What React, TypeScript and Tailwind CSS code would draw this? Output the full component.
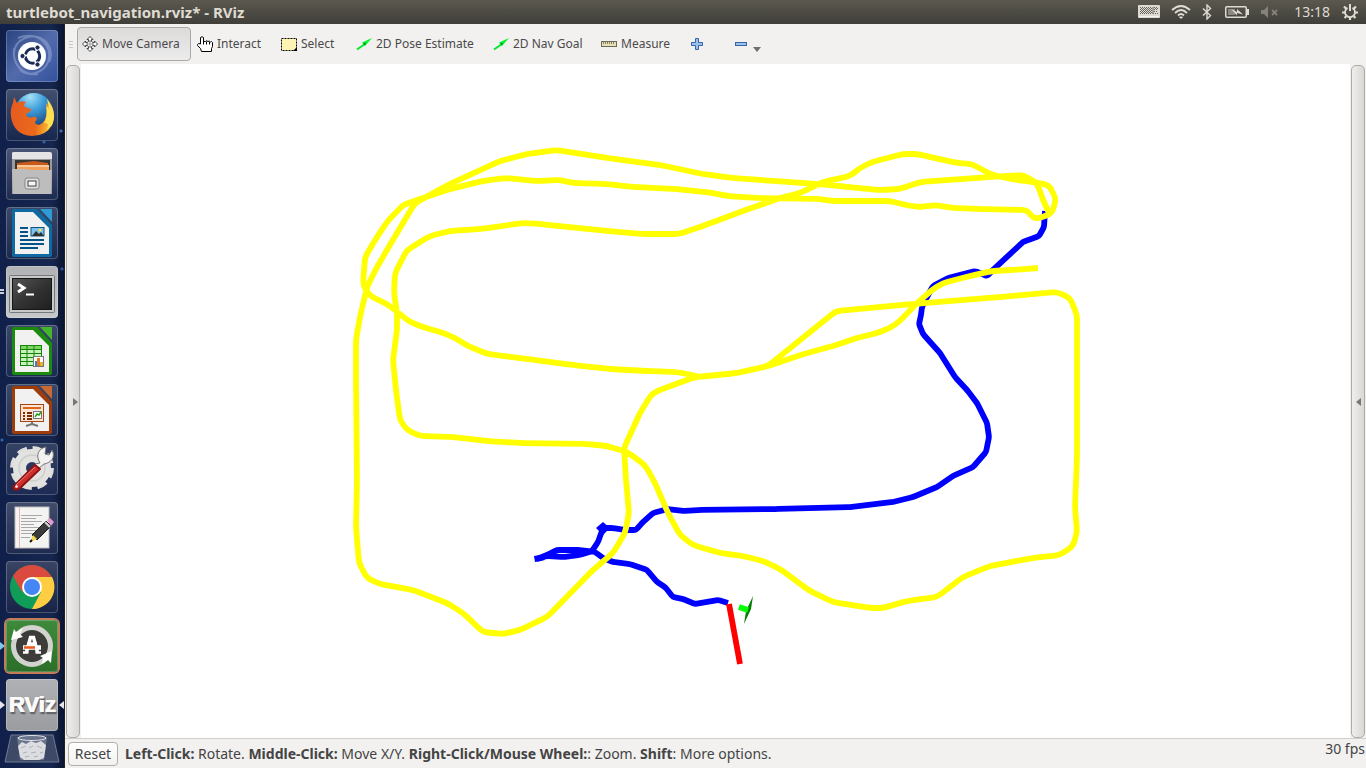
import type { ReactNode } from "react";

type Point = [number, number];

const parse = (text: string): Point[] =>
  text
    .trim()
    .split(/\s+/)
    .map((pair) => pair.split(",").map(Number) as Point);

/* Joins the points with straight runs and softly rounded corners. */
function roundedPath(points: Point[], radius = 5) {
  const toward = (from: Point, to: Point): Point => {
    const dx = to[0] - from[0];
    const dy = to[1] - from[1];
    const length = Math.hypot(dx, dy) || 1;
    const r = Math.min(radius, length / 2);
    return [from[0] + (dx / length) * r, from[1] + (dy / length) * r];
  };
  let d = `M${points[0][0]} ${points[0][1]}`;
  for (let i = 1; i < points.length - 1; i++) {
    const a = toward(points[i], points[i - 1]);
    const b = toward(points[i], points[i + 1]);
    d += `L${a[0]} ${a[1]}Q${points[i][0]} ${points[i][1]} ${b[0]} ${b[1]}`;
  }
  const last = points[points.length - 1];
  return `${d}L${last[0]} ${last[1]}`;
}

const plannedPath = parse(`
1038,268 1013,270 992,271 970,276 943,283 932,290 915,305 900,321 890,328 877,333 857,338 833,346 807,353 768,366 737,373 700,377
692,375 677,372 647,371 610,369 573,365 527,359 488,354 470,347 453,337 443,333 423,327 410,322 387,304 370,296 363,285 365,257 377,237
387,222 403,205 420,199 450,189 483,181 505,178 537,181 560,180 573,183 607,184 633,187 677,189 713,193 727,196 757,198 820,199 832,201 863,201
890,201 910,206 922,207 935,205 953,208 983,209 1027,210 1034,219 1043,217 1052,213 1056,199 1049,185 1033,182 1010,179 990,174 972,164
957,163 917,154 903,154 872,162 860,168 850,176 823,182 800,193 780,198 743,211 700,227 679,234 643,234 607,231 540,224 523,223 480,229 450,231
430,236 407,250 395,273 394,293 397,313 397,330 393,360 396,390 400,420 407,430 420,436 453,437 487,441 520,443 587,444 607,446 627,452 645,465
655,483 668,513 680,535 693,545 720,553 743,556 763,561 780,569 810,591 833,602 870,608 883,608 907,601 937,597 963,577 990,566 1033,558 1060,555
1073,546 1077,532 1075,507 1077,457 1077,315 1070,298 1057,292 1000,297 913,304 836,311 768,366 737,373 695,377 657,391 651,395 640,413 624,448
626,480 629,513 625,533 613,553 593,570 547,617 520,630 503,634 483,632 463,613 447,603 413,590 380,584 367,578 359,563 356,527 357,480 356,380
356,340 360,317 367,287 377,267 397,233 415,203 450,184 500,161 527,154 557,150 607,158 660,165 703,174 733,178 817,184 880,190 900,189 920,182
990,177 1023,175 1037,183 1043,200 1049,213`);

const drivenPath = parse(`
1045,211 1044,227 1039,236 1023,242 995,268 987,276 975,271 948,278 933,286 927,297 922,307 921,315 919,324 923,334 940,353 955,377 967,390 977,403
987,423 989,437 986,452 973,467 953,476 937,487 913,497 893,502 850,507 777,509 700,510 683,511 668,509 653,513 642,523 636,530 625,530 613,528 603,528
598,542 592,551 580,555 563,557 547,556 537,559 547,555 557,550 580,550 595,552 603,558 613,562 630,564 647,570 657,582 665,587 673,597 683,599
695,604 718,600 728,603`);

function Viewport() {
  return (
    <svg
      viewBox="81 64 1269 674"
      preserveAspectRatio="xMidYMid meet"
      className="block h-full w-full"
      role="img"
      aria-label="Robot path view"
      fill="none"
      strokeWidth="5.8"
      strokeLinejoin="round"
    >
      <path d={roundedPath(drivenPath, 2)} stroke="#0000ff" />
      <path d="M603 522l7 6-7 7-7-7z" fill="#0000ff" />
      <path d="M534 556L540 555L545 560L535 562Z" fill="#0000ff" />
      <path d={roundedPath(plannedPath)} stroke="#ffff00" />
      <path d="M729 604L740 664" stroke="#ff0000" />
      <path d="M753 596L751 609L744 624L746 611Z" fill="#008000" />
      <path d="M739 607L748 610" stroke="#00ff00" />
    </svg>
  );
}

/* ---------- launcher ---------- */

const Icon = ({ children }: { children: ReactNode }) => (
  <svg viewBox="0 0 52 52" className="block size-[52px]" aria-hidden="true">
    {children}
  </svg>
);

const DashIcon = () => (
  <Icon>
    <path d="M8 24C8 8 28 2 38 10C46 17 46 27 43 32M12 8C32 0 48 16 42 32C38 42 24 48 14 40M8 18C6 34 16 46 32 44" fill="none" stroke="#9fb0dc" strokeOpacity=".5" strokeWidth="2" />
    <circle cx="26" cy="26" r="14" fill="#fff" />
    <circle cx="26.500" cy="26" r="7.200" fill="none" stroke="#1b2a57" strokeWidth="3" strokeDasharray="13 2" strokeDashoffset="6" />
    <circle cx="16.500" cy="26" r="2.600" fill="#1b2a57" stroke="#fff" />
    <circle cx="31.500" cy="17.500" r="2.600" fill="#1b2a57" stroke="#fff" />
    <circle cx="31.500" cy="34.500" r="2.600" fill="#1b2a57" stroke="#fff" />
  </Icon>
);

const FirefoxIcon = () => (
  <Icon>
    <defs>
      <radialGradient id="ff-globe" cx=".4" cy=".1" r=".9"><stop offset="0" stopColor="#a4e0f5" /><stop offset=".4" stopColor="#3f9fdb" /><stop offset="1" stopColor="#12366f" /></radialGradient>
      <linearGradient id="ff-fox" x1="0" x2="1" y2=".1"><stop offset="0" stopColor="#e65a20" /><stop offset=".65" stopColor="#ea6a1c" /><stop offset="1" stopColor="#fbc637" /></linearGradient>
    </defs>
    <circle cx="28" cy="23" r="19" fill="url(#ff-globe)" />
    <path d="M8 8L11 14Q15 11 20 13Q17 16 19 18L25 20Q26 22 20 25Q21 30 27 28Q30 27 31 30Q26 35 33 36Q41 33 41 20L40 14Q51 24 46 36Q40 47 26 47Q8 46 5 28Q4 20 7 14Z" fill="url(#ff-fox)" />
    <path d="M41 10Q52 23 46 36L40 42Q45 33 38 34Q42 28 40 17L43 20Z" fill="#ffdf52" />
  </Icon>
);

const FilesIcon = () => (
  <Icon>
    <path d="M6 5Q6 4 8 4H44Q46 4 46 6V44H6Z" fill="#e4e4e4" />
    <path d="M6 11H46V46H6Z" fill="#9a9a9a" />
    <path d="M9 12H44V25H9Z" fill="#353535" />
    <path d="M11 15L28 13L42 15V24H11Z" fill="#c75a1c" />
    <path d="M11 17H43V24H11Z" fill="#f2a05a" />
    <path d="M11 18H43" stroke="#fff0dd" />
    <path d="M6 21H21L24 22H46L45 46H7Z" fill="#bdbdbd" />
    <rect x="19" y="30" width="14" height="11" rx="2" fill="#dedede" stroke="#858585" />
    <rect x="22" y="33" width="8" height="5" fill="#f6f6f6" stroke="#444" />
  </Icon>
);

function OfficePage({ color, fold, children }: { color: string; fold: string; children: ReactNode }) {
  return (
    <Icon>
      <path d="M8 2H31L46 18V48Q46 50 44 50H8Q6 50 6 48V4Q6 2 8 2Z" fill={color} />
      <path d="M34 2H46V15Z" fill={fold} />
      <path d="M9 5H27L43 21V47H9Z" fill="#f1f1f1" />
      {children}
    </Icon>
  );
}

const WriterIcon = () => (
  <OfficePage color="#0e6aa0" fold="#2e9bd4">
    <path d="M14 21H22M14 25H22M14 29H22M14 33H38M14 37H38M14 41H32" stroke="#055488" strokeWidth="2" />
    <rect x="25" y="20.500" width="13" height="8.500" fill="#7cc2ed" stroke="#055488" />
    <path d="M26 29L30 24L33 27L35 25L38 29Z" fill="#30302a" />
    <circle cx="34" cy="23" r="1.500" fill="#ffe04d" />
  </OfficePage>
);

const CalcIcon = () => (
  <OfficePage color="#1c8a0c" fold="#43b62e">
    <path d="M14 20H36V41H14Z" fill="#c5f3b8" />
    <path d="M14 20H36V24H14Z" fill="#7ad862" />
    <path d="M14.500 20V41M21 20V41M28 20V41M35.500 20V41M14 20.500H36M14 24.500H36M14 28.500H36M14 32.500H36M14 36.500H36M14 40.500H36" stroke="#15820b" />
    <rect x="27.500" y="31.500" width="10" height="10" fill="#fff" stroke="#777" />
    <path d="M29 36H31V41H29Z" fill="#2b88ce" /><path d="M31 33H34V41H31Z" fill="#ef7521" /><path d="M34 37H37V41H34Z" fill="#e0b622" />
  </OfficePage>
);

const ImpressIcon = () => (
  <OfficePage color="#9e3d0a" fold="#cb6932">
    <rect x="14.500" y="20.500" width="23" height="17" fill="#fbe4d4" stroke="#a5450f" />
    <path d="M17 24H35" stroke="#e0661d" strokeWidth="2" />
    <path d="M17 29H19M17 32H19M17 35H19M21 29H26M21 32H26M21 35H26" stroke="#7c2d05" strokeWidth="2" />
    <rect x="27.500" y="27.500" width="8" height="7" fill="#fff" stroke="#777" />
    <path d="M29 33L31 30L33 31L35 28" stroke="#25a018" fill="none" strokeWidth="1.500" />
    <path d="M26 38V40L20 42M26 40L32 42" stroke="#777" strokeWidth="2" fill="none" />
  </OfficePage>
);

const TerminalIcon = () => (
  <Icon>
    <defs><linearGradient id="term" x2="1" y2="1"><stop offset="0" stopColor="#555" /><stop offset=".5" stopColor="#333" /><stop offset="1" stopColor="#1f1f1f" /></linearGradient></defs>
    <rect x="3.500" y="9.500" width="45" height="37" rx="1" fill="#c7c8ca" stroke="#77787a" />
    <rect x="6.500" y="12.500" width="39" height="31" fill="url(#term)" stroke="#151515" />
    <path d="M12 18L18 22L12 26" stroke="#fff" strokeWidth="3" fill="none" /><path d="M20 28.500H28" stroke="#fff" strokeWidth="2" />
  </Icon>
);

const SettingsIcon = () => (
  <Icon>
    <circle cx="26" cy="25" r="18" fill="none" stroke="#dededc" strokeWidth="8" strokeDasharray="9 5.137" />
    <circle cx="26" cy="25" r="12.500" fill="none" stroke="#e2e2e0" strokeWidth="13" />
    <circle cx="26" cy="25" r="13" fill="none" stroke="#cdcdcb" strokeWidth="1.500" />
    <path d="M34 20C29 12 33 5 40 4L39 11L43 12L46 7C50 14 45 20 38 21L33 25L29 21Z" fill="#f2f2f0" stroke="#777" />
    <path d="M8 43L29 22L34 26L13 46Q8 48 7 44Z" fill="#d22d2d" stroke="#8d1414" strokeWidth="2" strokeLinejoin="round" />
    <path d="M10 42L29 24" stroke="#f28484" /><circle cx="10.500" cy="43.500" r="1.300" fill="#fff" />
  </Icon>
);

const EditorIcon = () => (
  <Icon>
    <rect x="9" y="5" width="34" height="41" fill="#f4f4f3" stroke="#bdbdbd" />
    <path d="M13.500 5V46" stroke="#f0b2b2" />
    <path d="M15 13.500H36M15 16.500H30M15 19.500H36M15 22.500H28M15 25.500H34M15 28.500H30M15 31.500H27M15 35.500H24" stroke="#a8a8a8" />
    <path d="M40 19L45 24L31 38L26 33Z" fill="#3b3b3b" stroke="#191919" />
    <path d="M41 18L44 16L48 20L45 24Z" fill="#e39ad0" /><path d="M39 20L44 25" stroke="#d8d8d8" strokeWidth="2" />
    <path d="M27 33L31 37L24 40Z" fill="#f0d84b" /><path d="M24 40L26 38" stroke="#111" strokeWidth="2" />
  </Icon>
);

const ChromeIcon = () => (
  <Icon>
    <circle cx="26" cy="26" r="22" fill="#109d58" />
    <path d="M7 15A22 22 0 0 1 45 15L46 16H26L16 31Z" fill="#db4a3e" />
    <path d="M46 16A22 22 0 0 1 26 48L35 31L26 16Z" fill="#ffcd42" />
    <circle cx="26" cy="26" r="10" fill="#fff" /><circle cx="26" cy="26" r="8" fill="#4487f4" />
  </Icon>
);

const UpdaterIcon = () => (
  <Icon>
    <circle cx="26" cy="26" r="16" fill="#3d3c3b" />
    <circle cx="26" cy="26" r="18.500" fill="none" stroke="#d2d3cf" strokeWidth="5" />
    <path d="M5 20L8 9L10 12L17 8L14 14L17 17Z" fill="#fff" />
    <path d="M46 31L45 43L42 40L36 44L37 38L34 36Z" fill="#fff" />
    <path d="M20.500 32L24.500 17.500H27.500L31.500 32M21 24H31" stroke="#fff" strokeWidth="3.500" fill="none" />
    <path d="M17 32.500H22.500M29.500 32.500H35" stroke="#fff" strokeWidth="2.500" />
    <path d="M17 27.500H35" stroke="#fff" strokeWidth="4.500" /><path d="M18 27.500H29" stroke="#e8591c" strokeWidth="2.500" />
  </Icon>
);

const RvizIcon = () => (
  <span className="flex size-[52px] items-center justify-center font-['Liberation_Sans',sans-serif] text-[22px] leading-6 font-bold text-[#fafafa] [text-shadow:1px_0_0_#fafafa,1px_2px_1px_#66666a,2px_2px_1px_#66666a]">
    RViz
  </span>
);

const apps: { name: string; tile: string; icon: ReactNode; left?: "double" | "blue" | "white"; right?: boolean }[] = [
  { name: "Search your computer", tile: "bg-linear-to-br from-[#29437f] via-[#536bab] to-[#32529e]", icon: <DashIcon /> },
  { name: "Firefox Web Browser", tile: "bg-linear-to-b from-[#43506f] to-[#17264d]", icon: <FirefoxIcon /> },
  { name: "Files", tile: "bg-linear-to-b from-[#4a5676] to-[#1e2b51]", icon: <FilesIcon /> },
  { name: "LibreOffice Writer", tile: "bg-linear-to-b from-[#3a4869] to-[#1a294d]", icon: <WriterIcon /> },
  { name: "Terminal", tile: "bg-linear-to-b from-[#b1b2b5] to-[#c6c7c9]", icon: <TerminalIcon />, left: "double" },
  { name: "LibreOffice Calc", tile: "bg-linear-to-b from-[#3a4869] to-[#1b2a50]", icon: <CalcIcon /> },
  { name: "LibreOffice Impress", tile: "bg-linear-to-b from-[#3a4869] to-[#202c50]", icon: <ImpressIcon /> },
  { name: "System Settings", tile: "bg-linear-to-b from-[#344264] to-[#1d2b55]", icon: <SettingsIcon /> },
  { name: "Text Editor", tile: "bg-linear-to-b from-[#424c6b] to-[#1e2b50]", icon: <EditorIcon /> },
  { name: "Google Chrome", tile: "bg-linear-to-b from-[#3a4565] to-[#172448]", icon: <ChromeIcon /> },
  { name: "Software Updater", tile: "bg-linear-to-b from-[#3f8a3c] to-[#2c6f28] ring-2 ring-[#c27c58]", icon: <UpdaterIcon />, left: "blue" },
  { name: "RViz", tile: "bg-linear-to-b from-[#b0b1b5] to-[#9b9ca0]", icon: <RvizIcon />, left: "white", right: true },
];

function Launcher() {
  return (
    <nav
      aria-label="Launcher"
      className="flex w-[65px] shrink-0 flex-col items-center gap-[7px] overflow-hidden border-r border-[#22221f] bg-[#10204a] bg-[radial-gradient(circle_at_61px_107px,#3f6db0_1px,transparent_2px),radial-gradient(circle_at_44px_118px,#38609d_1px,transparent_2px),radial-gradient(circle_at_62px_245px,#2f5698_1px,transparent_2px),radial-gradient(circle_at_2px_416px,#3563a8_1px,transparent_2px),linear-gradient(90deg,#10204a,#15264f_80%,#0b1531)] pt-[6px]"
    >
      {apps.map((app) => (
        <div key={app.name} className="relative flex w-full shrink-0 justify-center">
          <button
            type="button"
            aria-label={app.name}
            className={`size-[52px] overflow-hidden rounded-[4px] shadow-[inset_0_0_0_1px_rgba(255,255,255,0.22)] ${app.tile}`}
          >
            {app.icon}
          </button>
          {app.left === "double" && (
            <span className="absolute top-[23px] left-0 h-[5px] w-1 border-y-2 border-[#c9cfdb]" />
          )}
          {app.left && app.left !== "double" && (
            <span
              className={`absolute top-[22px] left-0 border-y-4 border-l-[5px] border-y-transparent ${app.left === "blue" ? "border-l-[#7cc8e8]" : "border-l-[#e4e6ec]"}`}
            />
          )}
          {app.right && (
            <span className="absolute top-[22px] right-0 border-y-4 border-r-[5px] border-y-transparent border-r-[#e4e6ec]" />
          )}
        </div>
      ))}
      <button type="button" aria-label="Trash" className="-mt-1 shrink-0">
        <svg viewBox="0 0 56 30" className="block h-[30px] w-14" aria-hidden="true">
          <path d="M7 1H49L55 28H1Z" fill="#3d4967" stroke="#6f7a94" />
          <path d="M13 3H43L40 26H16Z" fill="#8b94a6" fillOpacity=".6" />
          <path d="M14 12L18 8L22 10L27 7L32 9L37 7L42 11L40 24L35 26H20L16 23Z" fill="#dcdde0" />
          <path d="M17 14L22 12M25 14L29 12M33 12L38 14M19 19L23 18M27 19L32 18M36 19L39 18M21 23L25 22M30 23L34 22" stroke="#aeb1b8" strokeWidth="1" fill="none" />
          <ellipse cx="28" cy="4" rx="14" ry="2.500" fill="#69748c" stroke="#dfe2e8" />
        </svg>
      </button>
    </nav>
  );
}

/* ---------- top panel ---------- */

function TopBar() {
  return (
    <header className="flex h-6 shrink-0 items-center justify-between bg-linear-to-b from-[#5b594f] to-[#3f3e39] pr-2 pl-[6px] text-[#dfdbd2]">
      <h1 className="text-[15px] leading-6 font-bold">turtlebot_navigation.rviz* - RViz</h1>
      <div className="flex items-center">
        <svg viewBox="0 0 22 14" className="h-[14px] w-[22px]" aria-hidden="true">
          <rect width="22" height="13" rx="1" fill="#dedad2" />
          <path d="M2 2.500H14M3 3.500H14M2 4.500H14M3 5.500H14M2 6.500H14M3 7.500H14M2 8.500H14" stroke="#67655f" strokeDasharray="1 1" />
          <path d="M16 2.500H20M17 3.500H20M16 4.500H20M16 6.500H20M15 8.500H20" stroke="#67655f" strokeDasharray="1 1" />
          <path d="M15 2V9" stroke="#67655f" /><path d="M1 11.500H21" stroke="#f5f2ec" />
        </svg>
        <svg viewBox="0 0 20 14" className="ml-[11px] h-[14px] w-5" fill="none" stroke="#dfdbd2" strokeWidth="1.800" aria-hidden="true">
          <path d="M1 5Q10-3 19 5M4 8Q10 2 16 8M7 10.500Q10 7.500 13 10.500" /><path d="M8.500 12L10 13.500L11.500 12Z" fill="#dfdbd2" strokeWidth="1" />
        </svg>
        <svg viewBox="0 0 10 16" className="ml-[11px] h-4 w-[10px]" fill="none" stroke="#dfdbd2" strokeWidth="1.400" aria-hidden="true">
          <path d="M1 4.500L8.500 11.500L5 15V1L8.500 4.500L1 11.500" />
        </svg>
        <svg viewBox="0 0 24 12" className="ml-[13px] h-3 w-6" aria-hidden="true">
          <rect x=".75" y=".75" width="20.500" height="10.500" rx="1" fill="none" stroke="#dfdbd2" strokeWidth="1.500" />
          <path d="M22 3H24V9H22Z" fill="#dfdbd2" /><path d="M3 3H10V9H3Z" fill="#8b8881" />
          <path d="M6 3L12 6V3L18 8.500L12 7V9.500Z" fill="#dfdbd2" />
        </svg>
        <svg viewBox="0 0 18 12" className="ml-3 h-3 w-[18px]" aria-hidden="true">
          <path d="M0 4H3L7 0V12L3 8H0Z" fill="#85827b" /><path d="M11 4L16 9M16 4L11 9" stroke="#85827b" strokeWidth="1.800" />
        </svg>
        <time className="ml-[15px] text-[14px] leading-6">13:18</time>
        <svg viewBox="0 0 16 16" className="ml-3 size-4" fill="none" stroke="#dfdbd2" aria-hidden="true">
          <path d="M5.500 3.900A5 5 0 1 0 10.500 3.900" strokeWidth="1.800" /><path d="M8 0V7" strokeWidth="2" />
          <path d="M0 8.500H3M13 8.500H16M8 13V16M2 2.500L4.500 5M14 2.500L11.500 5M2.500 14L4.500 12M13.500 14L11.500 12" strokeWidth="2.200" />
        </svg>
      </div>
    </header>
  );
}

/* ---------- tool bar ---------- */

const Small = ({ children }: { children: ReactNode }) => (
  <svg viewBox="0 0 16 16" className="size-4 shrink-0" aria-hidden="true">
    {children}
  </svg>
);

const MoveIcon = () => (
  <Small>
    <path d="M8 .5L11 3.500H9.500V6.500H12.500V5L15.500 8L12.500 11V9.500H9.500V12.500H11L8 15.500L5 12.500H6.500V9.500H3.500V11L.5 8L3.500 5V6.500H6.500V3.500H5Z" fill="#fff" stroke="#333" strokeWidth=".9" />
    <circle cx="8" cy="8" r="3" fill="#f4f4f4" stroke="#666" strokeWidth=".8" /><path d="M8 4V12M4 8H12" stroke="#777" strokeWidth=".6" />
  </Small>
);

const HandIcon = () => (
  <Small>
    <path d="M4.500 15.500H14.500V12.500L15.500 10.500V6.500Q14.500 5 13.500 6Q12.500 4.500 11 5.500Q9.500 4 8.500 5.500H6.500V1.500Q5 0 3.500 1.500V8L1.500 7.500Q.5 8 .5 9.500L3.500 12.500Z" fill="#fff" stroke="#000" />
    <path d="M6.500 5V8.500M9.500 5.500V8.500M12.500 6V8.500" stroke="#000" />
  </Small>
);

const SelectIcon = () => (
  <Small>
    <rect x=".5" y="2.500" width="15" height="12" fill="#fdf3b3" stroke="#000" strokeDasharray="2 1" /><path d="M16 11V15H12Z" fill="#000" />
  </Small>
);

const ArrowIcon = () => (
  <Small>
    <path d="M1 13.500L9 8" stroke="#00e82a" strokeWidth="2" /><path d="M16 2L6 6.500L9 10Z" fill="#00f62c" /><path d="M7 7L9 9.500L10 7Z" fill="#078a1c" />
  </Small>
);

const RulerIcon = () => (
  <Small>
    <rect x=".5" y="5.500" width="15" height="5" fill="#e9e1b4" stroke="#6d6a5b" /><path d="M2.500 6V8M4.500 6V8M6.500 6V8M8.500 6V8M10.500 6V8M12.500 6V8" stroke="#6d6a5b" strokeWidth=".8" />
  </Small>
);

const PlusIcon = () => (
  <Small>
    <path d="M6.500 2.500H9.500V6.500H13.500V9.500H9.500V13.500H6.500V9.500H2.500V6.500H6.500Z" fill="#9fc0ea" stroke="#3465a4" />
  </Small>
);

const MinusIcon = () => (
  <Small>
    <rect x="2.500" y="6.500" width="11" height="3" fill="#9fc0ea" stroke="#3465a4" />
  </Small>
);

const tools = [
  { label: "Interact", width: "w-[84px]", icon: <HandIcon /> },
  { label: "Select", width: "w-[75px]", icon: <SelectIcon /> },
  { label: "2D Pose Estimate", width: "w-[137px]", icon: <ArrowIcon /> },
  { label: "2D Nav Goal", width: "w-[108px]", icon: <ArrowIcon /> },
  { label: "Measure", width: "w-[88px]", icon: <RulerIcon /> },
];

function ToolBar() {
  return (
    <div role="toolbar" aria-label="Tools" className="flex h-10 shrink-0 items-center bg-[#f2f1f0] pl-1 text-[12px] leading-4 text-[#4a4a4a]">
      <span className="mr-1 flex w-1 flex-col gap-[2px]">
        <span className="h-px bg-[#c9c8c6]" />
        <span className="h-px bg-[#c9c8c6]" />
        <span className="h-px bg-[#c9c8c6]" />
      </span>
      <button
        type="button"
        aria-pressed="true"
        className="mr-[6px] flex h-[34px] w-[114px] items-center gap-1 rounded-[4px] border border-[#aaa8a5] bg-linear-to-b from-[#dcdbda] to-[#edecec] pl-1 whitespace-nowrap"
      >
        <MoveIcon />
        Move Camera
      </button>
      {tools.map((tool) => (
        <button key={tool.label} type="button" className={`flex h-8 shrink-0 items-center gap-1 whitespace-nowrap ${tool.width}`}>
          {tool.icon}
          {tool.label}
        </button>
      ))}
      <button type="button" aria-label="Add tool" className="mr-7 shrink-0">
        <PlusIcon />
      </button>
      <button type="button" aria-label="Remove tool" className="flex shrink-0 items-end gap-1">
        <MinusIcon />
        <span className="border-x-4 border-t-[5px] border-x-transparent border-t-[#6f6f6f]" />
      </button>
    </div>
  );
}

function SideHandle({ side }: { side: "left" | "right" }) {
  return (
    <div className="flex w-4 shrink-0 bg-[#f2f1f0] px-px pt-px">
      <button
        type="button"
        aria-label={side === "left" ? "Show left panel" : "Show right panel"}
        className="flex w-full items-center justify-end rounded-[5px] border border-[#aeaba7] bg-linear-to-r from-[#efeeed] to-[#d9d8d6] pt-px pr-px"
      >
        <span
          className={
            side === "left"
              ? "border-y-4 border-l-[5px] border-y-transparent border-l-[#777]"
              : "mr-[2px] border-y-4 border-r-[5px] border-y-transparent border-r-[#777]"
          }
        />
      </button>
    </div>
  );
}

export default function App() {
  return (
    <div className="flex h-screen flex-col overflow-hidden bg-white font-['Noto_Sans','Open_Sans',sans-serif]">
      <TopBar />
      <div className="flex min-h-0 flex-1">
        <Launcher />
        <div className="flex min-w-0 flex-1 flex-col">
          <ToolBar />
          <main className="flex min-h-0 flex-1">
            <SideHandle side="left" />
            <div className="min-w-0 flex-1 bg-white">
              <Viewport />
            </div>
            <SideHandle side="right" />
          </main>
          <footer className="flex h-[30px] shrink-0 items-center border-t border-[#cfcecc] bg-[#f2f1f0] pl-[3px] text-[14px] leading-5 text-[#444]">
            <button type="button" className="h-6 w-[50px] rounded-[4px] border border-[#b1afab] bg-linear-to-b from-white to-[#f3f2f1]">
              Reset
            </button>
            <p className="ml-[7px] whitespace-nowrap">
              <b>Left-Click:</b> Rotate. <b>Middle-Click:</b> Move X/Y. <b>Right-Click/Mouse Wheel:</b>: Zoom. <b>Shift</b>: More options.
            </p>
            <span className="ml-auto self-start pr-px whitespace-nowrap">30 fps</span>
          </footer>
        </div>
      </div>
    </div>
  );
}
